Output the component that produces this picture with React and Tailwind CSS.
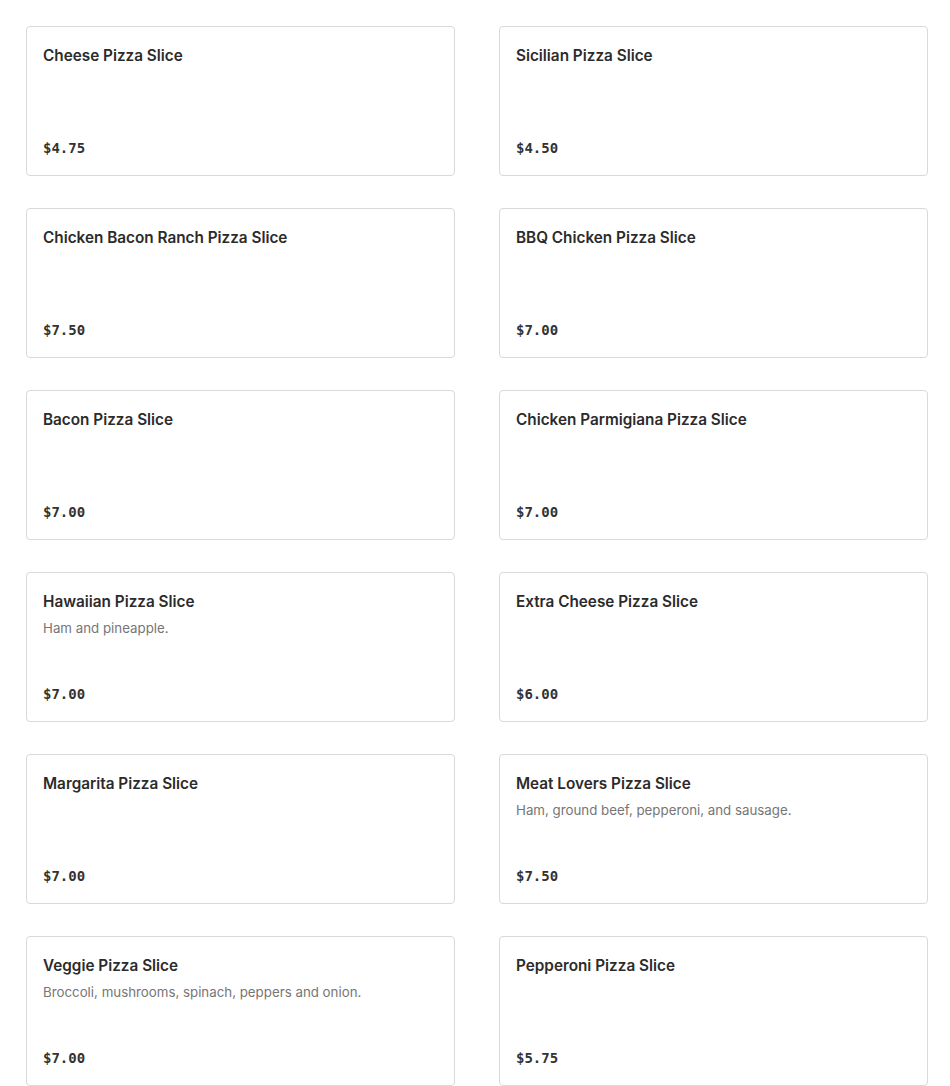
import React from "react";

const items = [
  ["Cheese Pizza Slice", "", "$4.75"],
  ["Sicilian Pizza Slice", "", "$4.50"],
  ["Chicken Bacon Ranch Pizza Slice", "", "$7.50"],
  ["BBQ Chicken Pizza Slice", "", "$7.00"],
  ["Bacon Pizza Slice", "", "$7.00"],
  ["Chicken Parmigiana Pizza Slice", "", "$7.00"],
  ["Hawaiian Pizza Slice", "Ham and pineapple.", "$7.00"],
  ["Extra Cheese Pizza Slice", "", "$6.00"],
  ["Margarita Pizza Slice", "", "$7.00"],
  ["Meat Lovers Pizza Slice", "Ham, ground beef, pepperoni, and sausage.", "$7.50"],
  ["Veggie Pizza Slice", "Broccoli, mushrooms, spinach, peppers and onion.", "$7.00"],
  ["Pepperoni Pizza Slice", "", "$5.75"],
];

export default function App() {
  return (
    <div className="bg-white min-h-[1086px] overflow-hidden" style={{ fontFamily: "Inter, 'Liberation Sans', sans-serif" }}>
      <div className="grid grid-cols-[429px_429px] gap-x-[44px] gap-y-[32px] pl-[26px] pt-[26px]">
        {items.map(([name, desc, price]) => (
          <div key={name} className="h-[150px] border border-[#d9d9d9] rounded-[4px] bg-white flex flex-col justify-between px-4 pt-[17px] pb-[17px]">
            <div>
              <div className="text-[15.3px] leading-6 font-semibold text-[#2b2b2b]">{name}</div>
              {desc && <div className="mt-[4px] text-[13.3px] leading-5 text-[#767676]">{desc}</div>}
            </div>
            <div className="text-[14px] leading-5 font-bold text-[#333333]" style={{ fontFamily: "'DejaVu Sans Mono', monospace" }}>{price}</div>
          </div>
        ))}
      </div>
    </div>
  );
}
